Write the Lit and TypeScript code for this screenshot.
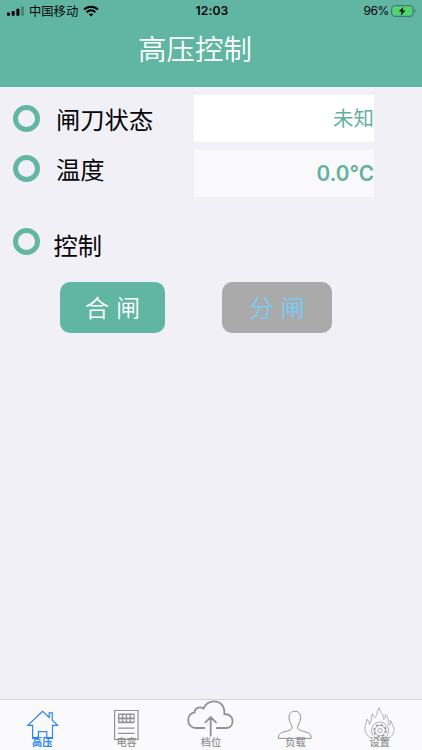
import { LitElement, html, css, svg } from "lit";
import { customElement, state } from "lit/decorators.js";
import { classMap } from "lit/directives/class-map.js";

const house = svg`<path stroke-width="1.2" d="M42.6 11.2L27.8 25.3H32.6V38.5H38.4V31.6H46.8V38.5H52.5V25.3H57.6L52.2 20.2V12.8H49.2V17.4Z"/>`;
const panel = svg`
  <path stroke-width="1.2" d="M30.6 10.5H54.1V39.5H30.6Z"/>
  <rect x="34" y="13.4" width="16.6" height="9.8" rx="1" fill="currentColor" stroke="none"/>
  <path stroke="#fafafc" stroke-width="2.4" stroke-dasharray="2.6 1.3" d="M35.3 16.2H49.6M35.3 20.4H49.6"/>
  <path stroke-width="1.3" d="M34 28.2H50.6M34 33.4H50.6"/>`;
const cloud = svg`
  <path stroke-width="1.8" stroke-linecap="round" d="M35.5 28H27C22.5 28 19.2 24.7 19.2 20.3C19.2 16.3 21.8 13.2 25.6 12.4C25.5 8 30.5 5.8 34.4 8.6C36.5 3.8 40.3 1.3 45 1.3C51.8 1.3 56 6.5 55.3 14C60.3 14 63.6 17 63.6 21.1C63.6 25 61 28 57 28H47.8M41.7 35.7V17M36.4 22.3L41.7 17L47 22.3"/>`;
const person = svg`<path d="M25.4 38.4C25.4 34.5 26.8 33.1 31 31.9C36.4 30.4 39.2 29.8 39 27C38.8 24.6 36 22.5 36 17.4C36 13.4 38.3 11.3 41.8 11.3C45.3 11.3 47.6 13.4 47.6 17.4C47.6 22.5 44.8 24.6 44.6 27C44.4 29.8 47.2 30.4 52.6 31.9C56.8 33.1 58.2 34.5 58.2 38.4Z"/>`;
const flame = svg`
  <g stroke-width=".7">
    <path d="M33.5 38.5C29 36 26.5 32 27 27.5C27.3 24.5 28.8 23 28.7 19.2C30.7 20.5 31.3 22.3 31.2 24.4C34.2 21 32.5 17.5 34.4 13.8C35 16 35.8 16.8 36.7 17.6C40.7 14.5 37.5 11.5 41.5 7.5C41.2 12.8 46.5 14 45.8 19.4C47.4 18.2 47.7 16.4 47.4 14.5C51.5 17.5 49 21.5 51.4 25.4C52.7 24 52.7 22.5 52.3 20.5C54.3 22.5 53.8 24 55.2 26.2C57.7 31 54.7 36 50.5 38.5"/>
    <circle cx="42" cy="30.6" r="8.6"/>
    <circle cx="42" cy="30.6" r="5.2"/>
    <circle cx="42" cy="30.6" r="6" stroke-width="1.5" stroke-dasharray="2.2 2.51"/>
    <circle cx="42" cy="30.6" r="2.2"/>
  </g>`;

@customElement("app-root")
export class AppRoot extends LitElement {
  @state() private active = 0;

  private tabs = [
    { label: "高压", icon: house },
    { label: "电容", icon: panel },
    { label: "档位", icon: cloud },
    { label: "负载", icon: person },
    { label: "设置", icon: flame },
  ];

  static styles = css`
    :host {
      display: flex;
      flex-direction: column;
      height: 750px;
      overflow: hidden;
      background: #f0f0f6;
      color: #050508;
      font-family: Inter, "Noto Sans CJK SC", sans-serif;
    }
    header {
      height: 86.5px;
      flex: none;
      background: #60b5a3;
    }
    .status {
      display: grid;
      grid-template-columns: 1fr auto 1fr;
      align-items: center;
      height: 22px;
      padding: 0 5px 0 7px;
      font-size: 12px;
      line-height: 22px;
    }
    .side {
      display: flex;
      align-items: center;
    }
    .end {
      justify-content: flex-end;
      gap: 2px;
      letter-spacing: -0.4px;
    }
    .signal { margin-right: 4px; }
    .wifi { margin-left: 5px; }
    .carrier {
      font-size: 12.3px;
      padding-top: 2px;
      line-height: 20px;
    }
    .clock {
      font-weight: 600;
      font-size: 12.2px;
      letter-spacing: 0.1px;
    }
    h1 {
      margin: 5px 0 0;
      padding-right: 32px;
      text-align: center;
      color: #fff;
      font-family: "Noto Sans CJK SC", sans-serif;
      font-size: 28.5px;
      font-weight: 350;
      line-height: 42px;
    }
    main {
      flex: 1;
      padding: 8.5px 48px 0 13px;
    }
    .row {
      display: grid;
      grid-template-columns: 43px 138px 180px;
      height: 47px;
      margin-bottom: 8px;
    }
    .ring {
      box-sizing: border-box;
      width: 27px;
      height: 27px;
      margin-top: 10px;
      border: 5px solid #64b6a4;
      border-radius: 50%;
    }
    .temp .ring { margin-top: 5px; }
    .label {
      font-size: 24.3px;
      line-height: 50px;
    }
    .temp .label { line-height: 40px; }
    .value {
      background: #fff;
      color: #64b29e;
      text-align: right;
      font-size: 20.5px;
      line-height: 48px;
      height: 47px;
    }
    .temp .value {
      background: #f9f9fc;
      font-weight: 600;
      font-size: 20.8px;
      line-height: 47px;
    }
    .control {
      display: flex;
      gap: 13.5px;
      margin-top: 30.5px;
      height: 46px;
    }
    .control .ring { margin-top: 0; }
    .control .label { line-height: 36px; }
    .buttons {
      display: flex;
      gap: 57px;
      padding-left: 47px;
      margin-top: 8px;
    }
    button {
      width: 105px;
      height: 51px;
      padding: 0;
      border: 0;
      border-radius: 10px;
      background: #60b5a3;
      color: #fff;
      font: 350 24.3px/52px Inter, "Noto Sans CJK SC", sans-serif;
    }
    .open {
      width: 110px;
      background: #aaa;
      color: #78cdf5;
    }
    nav {
      flex: none;
      display: grid;
      grid-template-columns: repeat(5, 1fr);
      height: 50px;
      border-top: 1px solid #d3d3da;
      background: #fafafc;
    }
    .tab {
      display: grid;
      color: #929292;
    }
    .tab > * { grid-area: 1 / 1; }
    .tab svg {
      width: 84.4px;
      height: 50px;
      fill: none;
      stroke: currentColor;
      stroke-width: 1;
      overflow: visible;
    }
    .tab span {
      align-self: end;
      text-align: center;
      font-size: 10.2px;
      font-weight: 500;
      line-height: 15px;
    }
    .active { color: #2b86ee; }
    .active span { font-weight: 700; }
  `;

  render() {
    return html`
      <header>
        <div class="status">
          <div class="side">
            <svg class="signal" width="18" height="10" viewBox="0 0 18 10">
              <rect x="0" y="6.5" width="3" height="3.3" rx=".7" />
              <rect x="4.7" y="5" width="3" height="4.8" rx=".7" />
              <rect x="9.4" y="2.8" width="3" height="7" rx=".7" />
              <rect x="14" y=".3" width="3" height="9.5" rx=".7" opacity=".25" />
            </svg>
            <span class="carrier">中国移动</span>
            <svg class="wifi" width="16" height="12" viewBox="0 0 16 12" fill="none" stroke="#000" stroke-width="2.1">
              <path d="M1.1 4.6C5 .7 11 .7 14.9 4.6M3.7 7.2C6.2 4.8 9.8 4.8 12.3 7.2" />
              <path d="M8 11.6L5.7 9.2C7 8.1 9 8.1 10.3 9.2Z" fill="#000" stroke="none" />
            </svg>
          </div>
          <span class="clock">12:03</span>
          <div class="side end">
            <span>96%</span>
            <svg width="26" height="12" viewBox="0 0 26 12">
              <rect x=".6" y=".6" width="21.6" height="10.8" rx="3" fill="none" stroke="#3d766a" />
              <rect x="2" y="2" width="18.4" height="8" rx="1.8" fill="#4fd964" />
              <path d="M23.7 4.2C25 4.8 25 7.2 23.7 7.8Z" fill="#3d766a" />
              <path d="M12.5 1.8L7.8 6.6H10.8L9.7 10.4L14.5 5.4H11.4Z" />
            </svg>
          </div>
        </div>
        <h1>高压控制</h1>
      </header>
      <main>
        <div class="row">
          <i class="ring"></i><span class="label">闸刀状态</span><span class="value">未知</span>
        </div>
        <div class="row temp">
          <i class="ring"></i><span class="label">温度</span><span class="value">0.0°C</span>
        </div>
        <div class="control"><i class="ring"></i><span class="label">控制</span></div>
        <div class="buttons">
          <button>合 闸</button>
          <button class="open">分 闸</button>
        </div>
      </main>
      <nav>
        ${this.tabs.map(
          (t, i) => html`<div
            class=${classMap({ tab: true, active: i === this.active })}
            @click=${() => (this.active = i)}
          >
            <svg viewBox="0 0 84.4 50">${t.icon}</svg>
            <span>${t.label}</span>
          </div>`
        )}
      </nav>
    `;
  }
}
